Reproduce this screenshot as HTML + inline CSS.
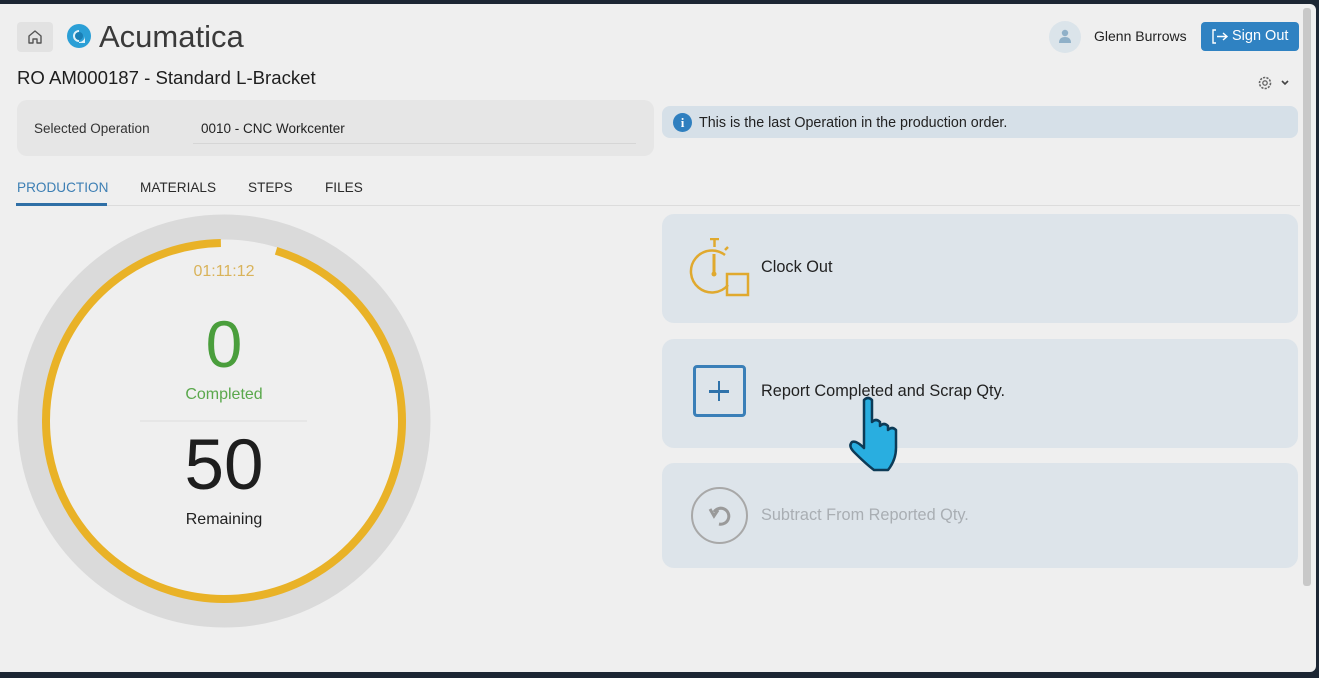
<!DOCTYPE html>
<html><head><meta charset="utf-8"><style>
*{margin:0;padding:0;box-sizing:border-box}
body{width:1319px;height:678px;background:#1c2633;font-family:"Liberation Sans",sans-serif;position:relative;overflow:hidden}
#pg{position:absolute;left:0;top:4px;width:1316px;height:668px;background:#efefef;border-radius:0 6px 6px 0}
.a{position:absolute}
.card{position:absolute;left:662px;width:636px;background:#dde4ea;border-radius:12px}
.tab{position:absolute;top:180px;font-size:13.6px;color:#2a2a2a}
</style></head><body>
<div id="pg"></div>
<!-- header -->
<div class="a" style="left:17px;top:22px;width:36px;height:30px;background:#e2e2e2;border-radius:4px"></div>
<svg class="a" style="left:26px;top:29px" width="18" height="16" viewBox="0 0 18 16"><path d="M3 7 L9 2 L15 7 V14 H11 V10 H7 V14 H3 Z" fill="none" stroke="#555" stroke-width="1.4" stroke-linejoin="round"/></svg>
<svg class="a" style="left:66px;top:23px" width="28" height="28" viewBox="0 0 28 28"><circle cx="13" cy="13" r="12" fill="#2b9fd6"/><path d="M13 7 a6 6 0 1 0 6 6 V20 H13" fill="#fff" opacity=".85"/><circle cx="13" cy="13" r="4" fill="#1a7fb5"/></svg>
<div class="a" style="left:99px;top:19px;font-size:31px;color:#3a3a3a">Acumatica</div>
<div class="a" style="left:17px;top:67px;font-size:18.6px;color:#1e1e1e">RO AM000187 - Standard L-Bracket</div>
<div class="a" style="left:1049px;top:21px;width:32px;height:32px;border-radius:50%;background:#dbe4ea"></div>
<svg class="a" style="left:1057px;top:28px" width="16" height="16" viewBox="0 0 16 16"><circle cx="8" cy="5" r="3.2" fill="#8fb0c8"/><path d="M2 15 Q2 9 8 9 Q14 9 14 15Z" fill="#8fb0c8"/></svg>
<div class="a" style="left:1094px;top:28px;font-size:14px;color:#222">Glenn Burrows</div>
<div class="a" style="left:1201px;top:22px;width:98px;height:29px;background:#2f82c2;border-radius:4px;color:#fff;font-size:14.5px;line-height:29px;padding-left:31px">Sign Out</div>
<svg class="a" style="left:1210px;top:28px" width="20" height="17" viewBox="0 0 20 17"><path d="M6 2 H3 V15 H6" fill="none" stroke="#fff" stroke-width="1.4"/><path d="M7 8.5 H17 M13 5 L17 8.5 L13 12" fill="none" stroke="#fff" stroke-width="1.4"/></svg>
<svg class="a" style="left:1257px;top:74px" width="34" height="18" viewBox="0 0 34 18"><circle cx="8" cy="9" r="5.5" fill="none" stroke="#666" stroke-width="1.6" stroke-dasharray="2.2 1.2"/><circle cx="8" cy="9" r="2.2" fill="none" stroke="#666" stroke-width="1.3"/><path d="M25 7 L28 10 L31 7" fill="none" stroke="#444" stroke-width="1.6"/></svg>
<!-- selected op -->
<div class="a" style="left:17px;top:100px;width:637px;height:56px;background:#e6e6e6;border-radius:10px"></div>
<div class="a" style="left:34px;top:121px;font-size:13.5px;color:#333">Selected Operation</div>
<div class="a" style="left:201px;top:121px;font-size:13.5px;color:#222">0010 - CNC Workcenter</div>
<div class="a" style="left:193px;top:143px;width:443px;height:1px;background:#d6d6d6"></div>
<!-- info -->
<div class="a" style="left:662px;top:106px;width:636px;height:32px;background:#d6e0e8;border-radius:8px"></div>
<div class="a" style="left:673px;top:113px;width:19px;height:19px;border-radius:50%;background:#2f7fbf;color:#fff;font-size:13px;font-weight:bold;text-align:center;line-height:19px;font-family:'Liberation Serif',serif">i</div>
<div class="a" style="left:699px;top:115px;font-size:14.3px;color:#222">This is the last Operation in the production order.</div>
<!-- tabs -->
<div class="tab" style="left:17px;color:#3d7fb4">PRODUCTION</div>
<div class="tab" style="left:140px">MATERIALS</div>
<div class="tab" style="left:248px">STEPS</div>
<div class="tab" style="left:325px">FILES</div>
<div class="a" style="left:16px;top:205px;width:1284px;height:1px;background:#dcdcdc"></div>
<div class="a" style="left:16px;top:203px;width:91px;height:3px;background:#2f6fa6"></div>
<!-- scrollbar -->
<div class="a" style="left:1303px;top:8px;width:8px;height:578px;background:#c8c8c8;border-radius:3px"></div>
<!-- ring -->
<svg class="a" style="left:0;top:200px" width="450" height="450" viewBox="0 200 450 450">
<circle cx="224" cy="421" r="194" fill="none" stroke="#dadada" stroke-width="25"/>
<circle cx="224" cy="421" r="178" fill="none" stroke="#e9b227" stroke-width="8" stroke-dasharray="1062 56" transform="rotate(-73 224 421)"/>
<line x1="140" y1="421" x2="307" y2="421" stroke="#dcdcdc" stroke-width="1"/>
</svg>
<div class="a" style="left:124px;top:263px;width:200px;text-align:center;font-size:16px;color:#d9b35a">01:11:12</div>
<div class="a" style="left:124px;top:306px;width:200px;text-align:center;font-size:66px;color:#4a9e3c;line-height:76px">0</div>
<div class="a" style="left:124px;top:386px;width:200px;text-align:center;font-size:16px;color:#5aa84c">Completed</div>
<div class="a" style="left:124px;top:428px;width:200px;text-align:center;font-size:71px;color:#1e1e1e;line-height:76px">50</div>
<div class="a" style="left:124px;top:511px;width:200px;text-align:center;font-size:16px;color:#222">Remaining</div>
<!-- cards -->
<div class="card" style="top:214px;height:109px"></div>
<div class="card" style="top:339px;height:109px"></div>
<div class="card" style="top:463px;height:105px"></div>
<svg class="a" style="left:688px;top:238px" width="64" height="60" viewBox="0 0 64 60"><path d="M40 47 A21 21 0 1 1 37 17" fill="none" stroke="#e0a92e" stroke-width="2.5"/><path d="M22 1 H31 M26.5 2 V9" stroke="#e0a92e" stroke-width="2.5"/><path d="M37 12 L40 9" stroke="#e0a92e" stroke-width="2.5"/><path d="M26 16 V34" stroke="#e0a92e" stroke-width="3"/><circle cx="26" cy="36" r="2.5" fill="#e0a92e"/><rect x="39" y="36" width="21" height="21" fill="none" stroke="#e0a92e" stroke-width="2.5"/></svg>
<div class="a" style="left:761px;top:258px;font-size:16.3px;color:#222">Clock Out</div>
<div class="a" style="left:693px;top:365px;width:53px;height:52px;border:3px solid #3a7fb8;border-radius:4px"></div>
<div class="a" style="left:709px;top:390px;width:20px;height:2.6px;background:#2f72aa"></div>
<div class="a" style="left:717.7px;top:381px;width:2.6px;height:20px;background:#2f72aa"></div>
<div class="a" style="left:761px;top:382px;font-size:16.3px;color:#222">Report Completed and Scrap Qty.</div>
<div class="a" style="left:691px;top:487px;width:57px;height:57px;border:2.5px solid #a8a8a8;border-radius:50%"></div>
<svg class="a" style="left:705px;top:501px" width="30" height="30" viewBox="0 0 30 30"><path d="M9 11 A8 8 0 1 1 14 23" fill="none" stroke="#9a9a9a" stroke-width="3"/><path d="M5 8 L9 15 L13 9" fill="none" stroke="#9a9a9a" stroke-width="3"/></svg>
<div class="a" style="left:761px;top:506px;font-size:16.3px;color:#a9aeb3">Subtract From Reported Qty.</div>
<!-- cursor -->
<svg class="a" style="left:844px;top:396px" width="62" height="78" viewBox="0 0 62 78"><path d="M20 4 Q24 0 28 4 V26 Q32 22 36 26 V30 Q40 26 44 30 V34 Q48 30 52 34 V52 Q52 64 44 74 H30 Q22 68 10 56 Q4 50 8 46 Q12 44 20 52 Z" fill="#29aee0" stroke="#0d3b57" stroke-width="2.5" stroke-linejoin="round"/></svg>
</body></html>
